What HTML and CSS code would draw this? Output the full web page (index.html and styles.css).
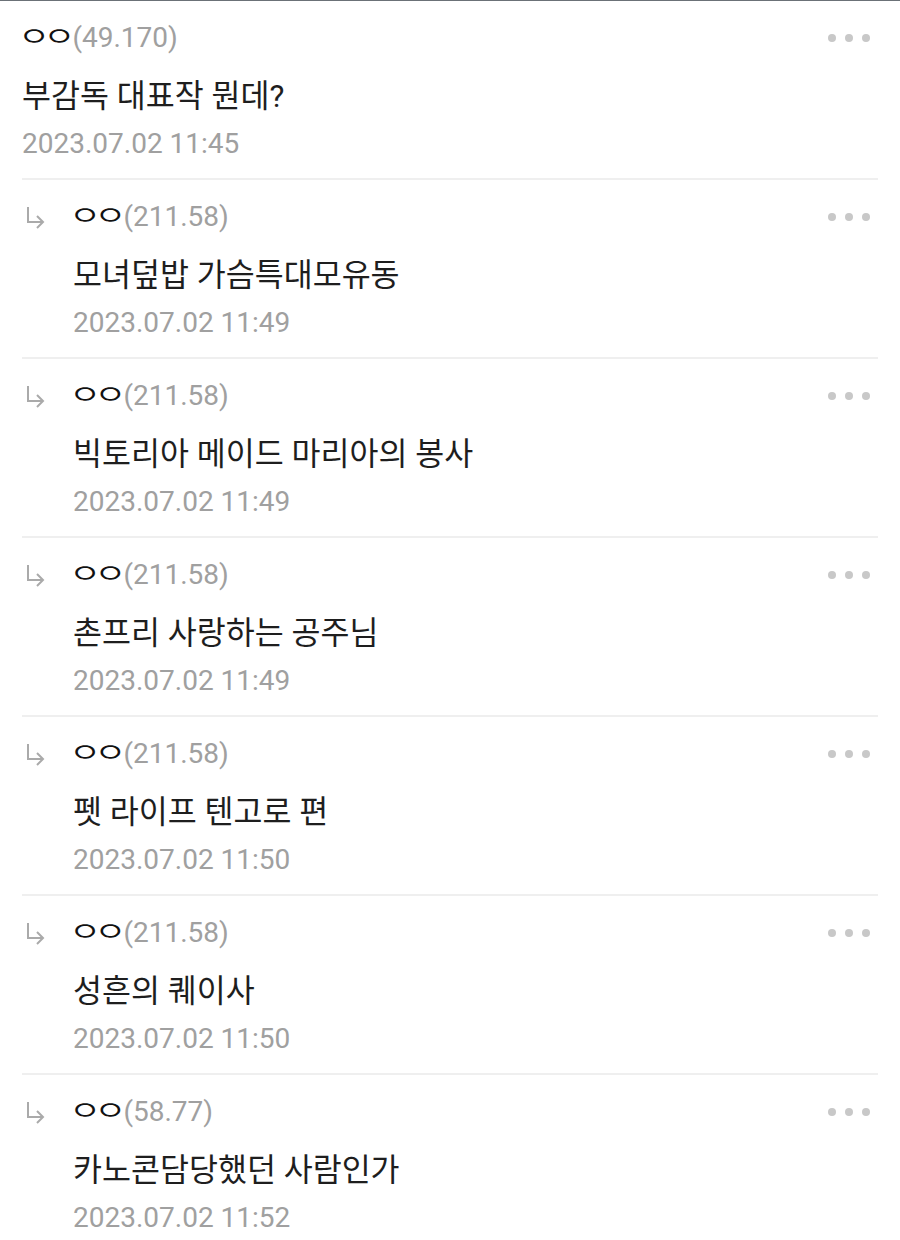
FILE: index.html
```html
<!DOCTYPE html>
<html lang="ko">
<head>
    <meta charset="UTF-8">
    <meta name="viewport" content="width=device-width, initial-scale=1.0">
    <title>댓글</title>
    <link rel="stylesheet" href="styles.css">
</head>
<body>
    <div class="comment-list">
        <div class="comment">
            <div class="comment-main">
                <div class="comment-head">
                    <span class="nick">ㅇㅇ</span><span class="ip">(49.170)</span>
                </div>
                <div class="comment-body">부감독 대표작 뭔데?</div>
                <div class="comment-date">2023.07.02 11:45</div>
            </div>
            <div class="more"><i></i><i></i><i></i></div>
        </div>

        <div class="comment reply">
            <div class="reply-mark">
                <svg width="20" height="24" viewBox="0 0 20 24"><path d="M3 1v15h15M12 10l6 6-6 6" fill="none" stroke="#aaa" stroke-width="2"/></svg>
            </div>
            <div class="comment-main">
                <div class="comment-head">
                    <span class="nick">ㅇㅇ</span><span class="ip">(211.58)</span>
                </div>
                <div class="comment-body">모녀덮밥 가슴특대모유동</div>
                <div class="comment-date">2023.07.02 11:49</div>
            </div>
            <div class="more"><i></i><i></i><i></i></div>
        </div>

        <div class="comment reply">
            <div class="reply-mark">
                <svg width="20" height="24" viewBox="0 0 20 24"><path d="M3 1v15h15M12 10l6 6-6 6" fill="none" stroke="#aaa" stroke-width="2"/></svg>
            </div>
            <div class="comment-main">
                <div class="comment-head">
                    <span class="nick">ㅇㅇ</span><span class="ip">(211.58)</span>
                </div>
                <div class="comment-body">빅토리아 메이드 마리아의 봉사</div>
                <div class="comment-date">2023.07.02 11:49</div>
            </div>
            <div class="more"><i></i><i></i><i></i></div>
        </div>

        <div class="comment reply">
            <div class="reply-mark">
                <svg width="20" height="24" viewBox="0 0 20 24"><path d="M3 1v15h15M12 10l6 6-6 6" fill="none" stroke="#aaa" stroke-width="2"/></svg>
            </div>
            <div class="comment-main">
                <div class="comment-head">
                    <span class="nick">ㅇㅇ</span><span class="ip">(211.58)</span>
                </div>
                <div class="comment-body">촌프리 사랑하는 공주님</div>
                <div class="comment-date">2023.07.02 11:49</div>
            </div>
            <div class="more"><i></i><i></i><i></i></div>
        </div>

        <div class="comment reply">
            <div class="reply-mark">
                <svg width="20" height="24" viewBox="0 0 20 24"><path d="M3 1v15h15M12 10l6 6-6 6" fill="none" stroke="#aaa" stroke-width="2"/></svg>
            </div>
            <div class="comment-main">
                <div class="comment-head">
                    <span class="nick">ㅇㅇ</span><span class="ip">(211.58)</span>
                </div>
                <div class="comment-body">펫 라이프 텐고로 편</div>
                <div class="comment-date">2023.07.02 11:50</div>
            </div>
            <div class="more"><i></i><i></i><i></i></div>
        </div>

        <div class="comment reply">
            <div class="reply-mark">
                <svg width="20" height="24" viewBox="0 0 20 24"><path d="M3 1v15h15M12 10l6 6-6 6" fill="none" stroke="#aaa" stroke-width="2"/></svg>
            </div>
            <div class="comment-main">
                <div class="comment-head">
                    <span class="nick">ㅇㅇ</span><span class="ip">(211.58)</span>
                </div>
                <div class="comment-body">성흔의 퀘이사</div>
                <div class="comment-date">2023.07.02 11:50</div>
            </div>
            <div class="more"><i></i><i></i><i></i></div>
        </div>

        <div class="comment reply">
            <div class="reply-mark">
                <svg width="20" height="24" viewBox="0 0 20 24"><path d="M3 1v15h15M12 10l6 6-6 6" fill="none" stroke="#aaa" stroke-width="2"/></svg>
            </div>
            <div class="comment-main">
                <div class="comment-head">
                    <span class="nick">ㅇㅇ</span><span class="ip">(58.77)</span>
                </div>
                <div class="comment-body">카노콘담당했던 사람인가</div>
                <div class="comment-date">2023.07.02 11:52</div>
            </div>
            <div class="more"><i></i><i></i><i></i></div>
        </div>
    </div>
</body>
</html>
```

FILE: styles.css
```css
body {
    margin: 0;
    background-color: #fff;
    font-family: Roboto, "Noto Sans CJK KR", sans-serif;
    font-size: 28px;
    color: #1e1e1e;
    border-top: 1px solid #6b7177;
}
.comment-list {
    margin: 0 22px;
}
.comment {
    display: flex;
    align-items: flex-start;
    padding: 8px 0 17px;
    border-bottom: 2px solid #efefef;
}
.comment:last-child {
    border-bottom: none;
}
.reply-mark {
    width: 51px;
    flex-shrink: 0;
    padding-top: 18px;
    padding-left: 3px;
    box-sizing: border-box;
}
.reply-mark svg {
    display: block;
}
.comment-main {
    flex: 1;
}
.comment-head {
    height: 58px;
    line-height: 58px;
    white-space: nowrap;
}
.nick {
    display: inline-block;
    margin: 0 4px 0 -4px;
    font-size: 35px;
    font-weight: 350;
    letter-spacing: -7px;
    line-height: 58px;
    vertical-align: top;
    transform: scaleY(0.74);
    color: #111;
}
.ip {
    color: #a0a0a0;
}
.comment-body {
    font-size: 31.5px;
    line-height: 60px;
    color: #1e1e1e;
}
.comment-date {
    line-height: 34px;
    color: #a0a0a0;
}
.more {
    display: flex;
    gap: 9px;
    padding-top: 25px;
    padding-right: 8px;
}
.more i {
    width: 8px;
    height: 8px;
    border-radius: 50%;
    background-color: #c8c8c8;
}
```
